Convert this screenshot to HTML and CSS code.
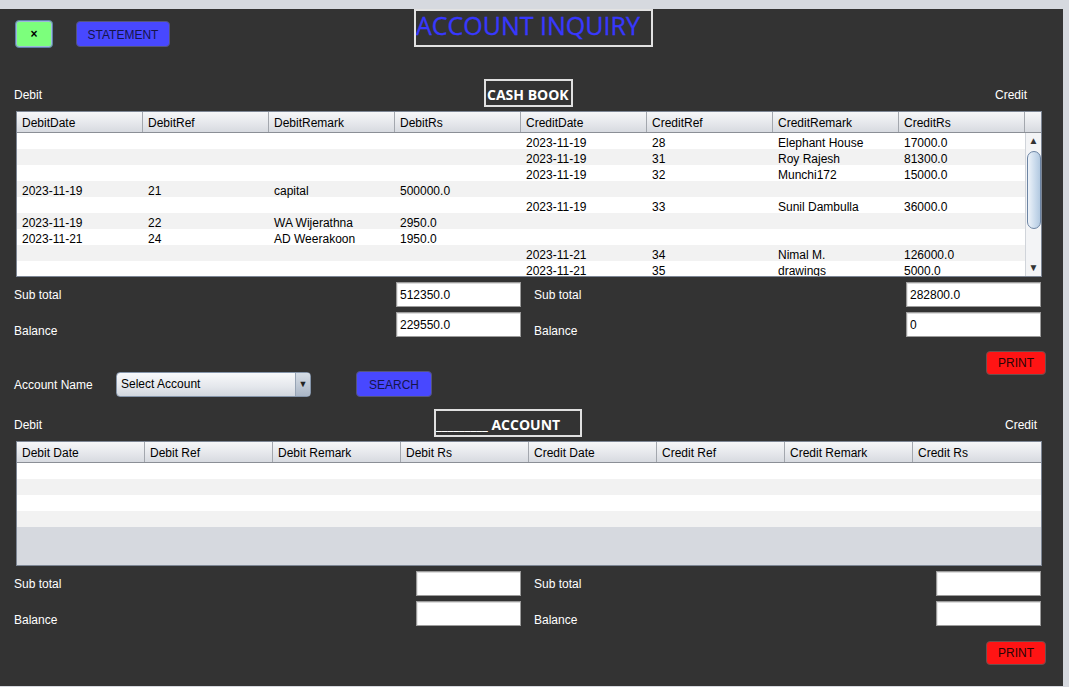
FILE: index.html
```html
<!DOCTYPE html>
<html>
<head>
<meta charset="utf-8">
<title>Account Inquiry</title>
<link rel="stylesheet" href="styles.css">
</head>
<body>
<div class="panel">
  <div class="top-row">
    <button class="btn btn-close">×</button>
    <button class="btn btn-blue btn-statement">STATEMENT</button>
    <div class="title">ACCOUNT INQUIRY</div>
  </div>

  <div class="section-row">
    <span class="lbl sec-left s1">Debit</span>
    <div class="sec-box cash">CASH BOOK</div>
    <span class="lbl sec-right s1r">Credit</span>
  </div>

  <div class="tbl tbl1">
    <div class="thead cols1">
      <div class="th">DebitDate</div><div class="th">DebitRef</div><div class="th">DebitRemark</div><div class="th">DebitRs</div>
      <div class="th">CreditDate</div><div class="th">CreditRef</div><div class="th">CreditRemark</div><div class="th">CreditRs</div><div class="th th-last"></div>
    </div>
    <div class="tbody1">
      <div class="rows">
        <div class="tr cols8a"><div></div><div></div><div></div><div></div><div>2023-11-19</div><div>28</div><div>Elephant House</div><div>17000.0</div></div>
        <div class="tr cols8a"><div></div><div></div><div></div><div></div><div>2023-11-19</div><div>31</div><div>Roy Rajesh</div><div>81300.0</div></div>
        <div class="tr cols8a"><div></div><div></div><div></div><div></div><div>2023-11-19</div><div>32</div><div>Munchi172</div><div>15000.0</div></div>
        <div class="tr cols8a"><div>2023-11-19</div><div>21</div><div>capital</div><div>500000.0</div><div></div><div></div><div></div><div></div></div>
        <div class="tr cols8a"><div></div><div></div><div></div><div></div><div>2023-11-19</div><div>33</div><div>Sunil Dambulla</div><div>36000.0</div></div>
        <div class="tr cols8a"><div>2023-11-19</div><div>22</div><div>WA Wijerathna</div><div>2950.0</div><div></div><div></div><div></div><div></div></div>
        <div class="tr cols8a"><div>2023-11-21</div><div>24</div><div>AD Weerakoon</div><div>1950.0</div><div></div><div></div><div></div><div></div></div>
        <div class="tr cols8a"><div></div><div></div><div></div><div></div><div>2023-11-21</div><div>34</div><div>Nimal M.</div><div>126000.0</div></div>
        <div class="tr cols8a"><div></div><div></div><div></div><div></div><div>2023-11-21</div><div>35</div><div>drawings</div><div>5000.0</div></div>
      </div>
      <div class="vscroll">
        <div class="sb-btn sb-up">▲</div>
        <div class="sb-track"><div class="sb-thumb"></div></div>
        <div class="sb-btn sb-down">▼</div>
      </div>
    </div>
  </div>

  <div class="totals totals1">
    <span class="lbl">Sub total</span><input class="field" value="512350.0"><span></span><span class="lbl">Sub total</span><input class="field" value="282800.0">
    <span class="lbl low">Balance</span><input class="field" value="229550.0"><span></span><span class="lbl low">Balance</span><input class="field" value="0">
  </div>

  <div class="controls">
    <div class="account-row">
      <span class="lbl acc-lbl">Account Name</span>
      <div class="combo"><span class="combo-text">Select Account</span><span class="combo-arrow">▼</span></div>
      <button class="btn btn-blue btn-search">SEARCH</button>
    </div>
    <button class="btn btn-print print1">PRINT</button>
  </div>

  <div class="section-row sec2">
    <span class="lbl sec-left s2">Debit</span>
    <div class="sec-box acct">_________ ACCOUNT</div>
    <span class="lbl sec-right s2r">Credit</span>
  </div>

  <div class="tbl tbl2">
    <div class="thead cols2">
      <div class="th">Debit Date</div><div class="th">Debit Ref</div><div class="th">Debit Remark</div><div class="th">Debit Rs</div>
      <div class="th">Credit Date</div><div class="th">Credit Ref</div><div class="th">Credit Remark</div><div class="th th-end">Credit Rs</div>
    </div>
    <div class="tbody2">
      <div class="tr"></div><div class="tr"></div><div class="tr"></div><div class="tr"></div>
    </div>
  </div>

  <div class="totals totals2">
    <span class="lbl">Sub total</span><input class="field" value=""><span></span><span class="lbl">Sub total</span><input class="field" value="">
    <span class="lbl low">Balance</span><input class="field" value=""><span></span><span class="lbl low">Balance</span><input class="field" value="">
  </div>

  <div class="print-row">
    <button class="btn btn-print">PRINT</button>
  </div>
</div>
</body>
</html>
```

FILE: styles.css
```css
* { box-sizing: border-box; }
html, body { margin: 0; padding: 0; }
body {
  background: #d6d9df;
  font-family: "Liberation Sans", Arial, sans-serif;
  font-size: 12px;
  width: 1069px;
  height: 687px;
  overflow: hidden;
}
.panel {
  margin-top: 9px;
  width: 1063px;
  height: 677px;
  background: #333333;
  display: flex;
  flex-direction: column;
}
.lbl { color: #ffffff; font-size: 12px; white-space: nowrap; }

.btn {
  font-family: "Liberation Sans", Arial, sans-serif;
  font-size: 12px;
  padding: 0;
  cursor: pointer;
  border-radius: 4px;
}
.top-row { display: flex; align-items: flex-start; height: 38px; }
.btn-close {
  margin-left: 15px; margin-top: 11px;
  width: 38px; height: 28px;
  background: #7cff7c;
  border: 1px solid #5f80aa;
  box-shadow: inset 0 0 0 1px #9db9d9;
  font-size: 12px; font-weight: bold; color: #000;
  line-height: 24px;
}
.btn-blue {
  background: #4848ff;
  border: 1px solid #55557a;
  color: #15154a;
}
.btn-statement { margin-left: 23px; margin-top: 12px; width: 94px; height: 26px; padding-top: 1px; }
.title {
  margin-left: 244px;
  width: 239px; height: 38px;
  border: 2px solid #e2e2e2;
  color: #3838ff;
  font-family: "Open Sans", sans-serif;
  font-size: 25px;
  line-height: 28px;
  padding-left: 0;
  white-space: nowrap;
  overflow: hidden;
  -webkit-text-stroke: 0.3px #3838ff;
}

.section-row { display: flex; align-items: center; height: 28px; margin-top: 32px; }
.section-row > .lbl { padding-top: 4px; }
.sec-left { padding-left: 14px; }
.s1 { width: 484px; }
.s2 { width: 434px; }
.sec-box {
  height: 28px;
  border: 2px solid #e0e0e0;
  color: #fff;
  font-family: "Open Sans", sans-serif;
  font-weight: bold;
  font-size: 14px;
  line-height: 27px;
  white-space: nowrap;
  overflow: hidden;
}
.cash { width: 89px; padding-left: 1px; }
.acct { width: 148px; padding-left: 0; }
.sec-right { flex: 1; text-align: right; }
.s1r { padding-right: 36px; }
.s2r { padding-right: 26px; }
.sec2 { margin-top: 12px; }

.tbl {
  margin-left: 16px;
  width: 1026px;
  border: 1px solid #7d8694;
  background: #fff;
  margin-top: 4px;
  color: #000;
}
.thead {
  display: grid;
  height: 21px;
  border-bottom: 1px solid #8b8f96;
  background: linear-gradient(#f6f7f9, #e6e8ec 55%, #d7dae0);
}
.cols1 { grid-template-columns: repeat(8, 126px) 16px; }
.cols2 { grid-template-columns: repeat(8, 128px); }
.th {
  border-right: 1px solid #a3a7ae;
  padding-left: 5px;
  line-height: 22px;
  white-space: nowrap;
  overflow: hidden;
}
.th-last, .th-end { border-right: none; }
.tbody1 { display: flex; height: 143px; overflow: hidden; }
.rows { width: 1008px; }
.tr { height: 16px; background: #ffffff; }
.tr:nth-child(even) { background: #f2f2f2; }
.cols8a { display: grid; grid-template-columns: repeat(8, 126px); grid-template-rows: 16px; }
.cols8a > div { padding-left: 5px; line-height: 20px; height: 16px; white-space: nowrap; }

.vscroll {
  width: 16px;
  display: flex;
  flex-direction: column;
  background: #f3f4f6;
  border-left: 1px solid #d0d4da;
}
.sb-btn {
  height: 16px;
  font-size: 10px;
  line-height: 16px;
  text-align: center;
  color: #333;
}
.sb-track { flex: 1; padding-top: 2px; }
.sb-thumb {
  height: 78px;
  margin-left: 1px;
  width: 14px;
  border: 1px solid #6c84a3;
  border-radius: 7px;
  background: linear-gradient(90deg, #eef3f9, #c9daec 60%, #b3c9e0);
}

.tbody2 { height: 102px; background: #d6d9df; }

.totals { display: grid; row-gap: 5px; margin-top: 5px; align-items: center; }
.totals1 { grid-template-columns: 396px 125px 13px 372px 135px; }
.totals2 { grid-template-columns: 416px 105px 13px 402px 105px; }
.totals > .lbl:nth-child(5n+1) { padding-left: 14px; }
.low { position: relative; top: 6px; }
.field {
  height: 25px;
  width: 100%;
  border: 1px solid #9c9c9c;
  box-shadow: inset 0 1px 0 #dcdcdc, inset 1px 0 0 #e8e8e8;
  background: #fff;
  font-family: "Liberation Sans", Arial, sans-serif;
  font-size: 12px;
  padding: 0 0 0 3px;
  color: #000;
  margin: 0;
}

.controls { display: flex; align-items: flex-start; height: 46px; margin-top: 14px; }
.account-row { display: flex; align-items: center; margin-top: 20px; height: 26px; flex: 1; }
.acc-lbl { padding-left: 14px; width: 116px; padding-top: 2px; }
.combo {
  width: 195px; height: 25px;
  border: 1px solid #8595aa;
  border-radius: 4px;
  background: linear-gradient(#f8f9fb, #e4e7ec 60%, #d2d7de);
  display: flex;
  align-items: center;
  overflow: hidden;
}
.combo-text { flex: 1; padding-left: 4px; color: #000; }
.combo-arrow {
  width: 15px; height: 100%;
  border-left: 1px solid #97a4b5;
  background: linear-gradient(#d6dde6, #aab6c6);
  font-size: 9px; line-height: 23px; text-align: center; color: #222;
}
.btn-search { margin-left: 45px; width: 76px; height: 26px; padding-top: 1px; }
.btn-print {
  width: 60px; height: 24px;
  background: #ff1414;
  border: 1px solid #6b5050;
  color: #2a0505;
  font-size: 12px;
}
.print1 { margin-right: 17px; }
.print-row { display: flex; justify-content: flex-end; padding-right: 17px; margin-top: 15px; }
```
